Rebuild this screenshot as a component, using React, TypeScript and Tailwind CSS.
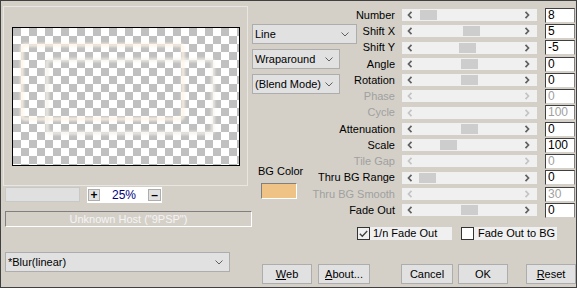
import React from 'react';

type Row = { label: string; value: string; h: string; thumb?: number; disabled?: boolean };

const rows: Row[] = [
  { label: 'Number', value: '8', h: 'h-[16px]', thumb: 18 },
  { label: 'Shift X', value: '5', h: 'h-[16px]', thumb: 61 },
  { label: 'Shift Y', value: '-5', h: 'h-[17px]', thumb: 57 },
  { label: 'Angle', value: '0', h: 'h-[16px]', thumb: 59 },
  { label: 'Rotation', value: '0', h: 'h-[16px]', thumb: 59 },
  { label: 'Phase', value: '0', h: 'h-[16px]', disabled: true },
  { label: 'Cycle', value: '100', h: 'h-[17px]', disabled: true },
  { label: 'Attenuation', value: '0', h: 'h-[16px]', thumb: 59 },
  { label: 'Scale', value: '100', h: 'h-[16px]', thumb: 38 },
  { label: 'Tile Gap', value: '0', h: 'h-[16px]', disabled: true },
  { label: 'Thru BG Range', value: '0', h: 'h-[17px]', thumb: 17 },
  { label: 'Thru BG Smooth', value: '30', h: 'h-[16px]', disabled: true },
  { label: 'Fade Out', value: '0', h: 'h-[16px]', thumb: 59 },
];

function Chevron() {
  return (
    <svg width="8" height="5" viewBox="0 0 8 5" className="shrink-0">
      <path d="M0.5 0.5 L4 4 L7.5 0.5" fill="none" stroke="#606060" strokeWidth="1" />
    </svg>
  );
}

function Combo({ text, className }: { text: string; className: string }) {
  return (
    <div
      className={
        'flex h-[20px] items-center justify-between border border-[#adadad] bg-[#e1e1e1] pl-[2px] pr-[6px] text-black ' +
        className
      }
    >
      <span>{text}</span>
      <Chevron />
    </div>
  );
}

function Arrow({ dir, disabled }: { dir: 'l' | 'r'; disabled?: boolean }) {
  const c = disabled ? '#c4c4c4' : '#606060';
  return (
    <svg width="6" height="8" viewBox="0 0 6 8" className="shrink-0">
      {dir === 'l' ? (
        <path d="M4.5 0.8 L1.5 4 L4.5 7.2" fill="none" stroke={c} strokeWidth="1.7" />
      ) : (
        <path d="M1.5 0.8 L4.5 4 L1.5 7.2" fill="none" stroke={c} strokeWidth="1.7" />
      )}
    </svg>
  );
}

function Slider({ thumb, disabled }: { thumb?: number; disabled?: boolean }) {
  return (
    <div className="relative ml-[7px] flex h-[12px] w-[135px] items-center justify-between bg-[#f0f0f0] pl-[5px] pr-[7px]">
      <Arrow dir="l" disabled={disabled} />
      {thumb !== undefined && (
        <div className="absolute top-[1px] h-[10px] w-[17px] bg-[#cdcdcd]" style={{ left: thumb }} />
      )}
      <Arrow dir="r" disabled={disabled} />
    </div>
  );
}

function Button({ children, w }: { children: React.ReactNode; w: string }) {
  return (
    <div
      className={
        'flex h-[20px] items-center justify-center border border-[#adadad] bg-[#e1e1e1] text-[11px] text-black ' + w
      }
    >
      {children}
    </div>
  );
}

function Preview() {
  return (
    <svg width="226" height="137" viewBox="0 0 226 137" className="block">
      <defs>
        <pattern id="chk" width="16" height="16" patternUnits="userSpaceOnUse">
          <rect width="16" height="16" fill="#ffffff" />
          <rect x="0" y="0" width="8" height="8" fill="#c0c0c0" />
          <rect x="8" y="8" width="8" height="8" fill="#c0c0c0" />
        </pattern>
        <filter id="soft" x="-10%" y="-10%" width="120%" height="120%">
          <feGaussianBlur stdDeviation="0.9" />
        </filter>
      </defs>
      <rect width="226" height="137" fill="url(#chk)" />
      <g filter="url(#soft)">
        <rect x="9" y="17" width="161" height="74" rx="3" fill="none" stroke="#fff8ee" strokeWidth="4" opacity="0.7" />
        <rect x="34" y="32" width="166" height="73" rx="3" fill="none" stroke="#fffaf2" strokeWidth="4" opacity="0.65" />
        <rect x="34" y="32" width="166" height="73" rx="3" fill="none" stroke="#d0d0d0" strokeWidth="0.8" opacity="0.5" />
        <rect x="9" y="17" width="161" height="74" rx="3" fill="none" stroke="#f6e2c4" strokeWidth="0.8" opacity="0.6" />
      </g>
    </svg>
  );
}

export default function App() {
  return (
    <div className="flex h-[288px] w-[577px] border border-[#404040] bg-[#d4d0c8] font-['Liberation_Sans',Arial,sans-serif] text-[11px] leading-[13px] text-black">
      {/* left column */}
      <div className="flex w-[251px] shrink-0 flex-col">
        <div className="ml-[2px] mt-[5px] h-[180px] w-[245px] border border-[#e8e6e0] pl-[8px] pt-[20px]">
          <div className="w-[228px] border border-black">
            <Preview />
          </div>
        </div>
        <div className="mt-[1px] flex items-start">
          <div className="ml-[4px] h-[15px] w-[75px] border border-[#c8c8c8] bg-[#e0e0e0]" />
          <div className="ml-[7px] flex h-[16px] w-[75px] items-center bg-white pl-[1px] pr-[1px]">
            <div className="flex h-[12px] w-[12px] items-center justify-center border border-[#adadad] bg-[#e1e1e1] text-[12px] font-bold leading-none">
              +
            </div>
            <div className="flex-1 text-center text-[12px] text-[#000080]">25%</div>
            <div className="flex h-[12px] w-[13px] items-center justify-center border border-[#adadad] bg-[#e1e1e1] text-[12px] font-bold leading-none">
              –
            </div>
          </div>
        </div>
        <div className="ml-[4px] mt-[8px] flex h-[16px] w-[247px] items-center justify-center border border-l-[#808080] border-t-[#808080] border-b-white border-r-white text-[#f4f4f4]">
          Unknown Host ("9PSP")
        </div>
        <Combo text="*Blur(linear)" className="ml-[4px] mt-[25px] w-[225px] pr-[4px]" />
      </div>

      {/* right part */}
      <div className="flex flex-1 flex-col">
        <div className="mt-[6px] grid">
          {/* middle controls */}
          <div className="col-start-1 row-start-1 flex flex-col items-start pt-[17px]">
            <Combo text="Line" className="w-[105px] pr-[7px]" />
            <Combo text="Wraparound" className="mt-[5px] w-[88px]" />
            <Combo text="(Blend Mode)" className="mt-[5px] w-[88px]" />
            <div className="ml-[6px] mt-[71px]">BG Color</div>
            <div className="ml-[9px] mt-[5px] h-[16px] w-[36px] border border-l-[#808080] border-t-[#808080] border-b-white border-r-white bg-[#efc385]" />
          </div>
          {/* slider rows */}
          <div className="col-start-1 row-start-1 flex flex-col">
            {rows.map((r) => (
              <div key={r.label} className={'flex items-center ' + r.h}>
                <div className={'w-[143px] text-right ' + (r.disabled ? 'text-[#a0a0a0]' : 'text-black')}>{r.label}</div>
                <Slider thumb={r.thumb} disabled={r.disabled} />
                <div
                  className={
                    'ml-[8px] flex h-[15px] w-[30px] items-center border border-l-[#404040] border-t-[#404040] border-r-[#808080] border-b-[#d4d0c8] bg-white pl-[2px] text-[12px] ' +
                    (r.disabled ? 'text-[#a0a0a0]' : 'text-black')
                  }
                >
                  {r.value}
                </div>
              </div>
            ))}
          </div>
        </div>

        {/* checkboxes */}
        <div className="ml-[105px] mt-[9px] flex h-[13px] items-center">
          <div className="flex h-[13px] w-[13px] items-center justify-center border border-[#333333] bg-[#f0f0f0]">
            <svg width="9" height="8" viewBox="0 0 9 8">
              <path d="M0.8 3.8 L3.3 6.3 L8.2 1" fill="none" stroke="#404040" strokeWidth="1.3" />
            </svg>
          </div>
          <div className="flex h-[13px] w-[82px] items-center whitespace-nowrap bg-[#f0f0f0] pl-[3px]">1/n Fade Out</div>
          <div className="ml-[9px] h-[13px] w-[13px] border border-[#333333] bg-white" />
          <div className="flex h-[13px] w-[83px] items-center whitespace-nowrap bg-[#f0f0f0] pl-[4px]">Fade Out to BG</div>
        </div>

        {/* buttons */}
        <div className="ml-[10px] mt-[24px] flex">
          <Button w="w-[50px]">
            <span className="underline">W</span>eb
          </Button>
          <Button w="ml-[6px] w-[52px]">
            <span className="underline">A</span>bout...
          </Button>
          <Button w="ml-[31px] w-[52px]">Cancel</Button>
          <Button w="ml-[5px] w-[50px]">OK</Button>
          <Button w="ml-[18px] w-[50px]">
            <span className="underline">R</span>eset
          </Button>
        </div>
      </div>
    </div>
  );
}
